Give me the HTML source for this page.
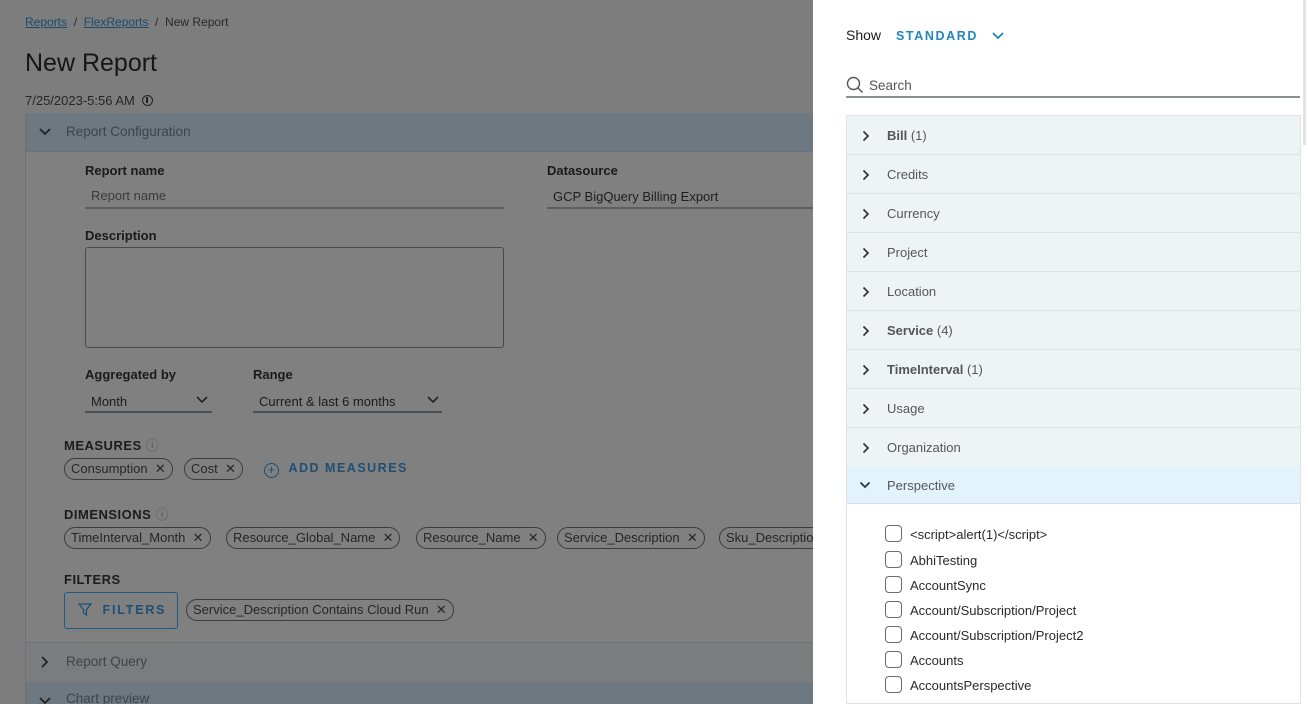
<!DOCTYPE html>
<html style="width:1308px;height:704px;overflow:hidden"><head><meta charset="utf-8"><style>
*{box-sizing:border-box;margin:0;padding:0}
body{width:1308px;height:704px;overflow:hidden;background:#7d7d7d;font-family:"Liberation Sans",sans-serif;position:relative;color:#1b1b1b}
.a{position:absolute}
.lbl{font-size:13px;font-weight:bold;color:#1a1a1a}
.pill{position:absolute;height:22px;border:1.5px solid #3c3c3c;border-radius:11px;font-size:13px;color:#262626;padding:2px 6px;white-space:nowrap}
.cap{font-size:13px;font-weight:bold;letter-spacing:.5px;color:#1c1c1c}
.row{position:absolute;left:847px;width:453px;height:39px;background:#eef3f6;border-bottom:1.5px solid #dce3e7;font-size:13px;color:#565656;padding:12px 0 0 40px}
.row svg{position:absolute;left:15px;top:14px}
.cb{position:absolute;left:885px;width:17px;height:17px;border:1.5px solid #6a6a6a;border-radius:4px}
.ct{position:absolute;left:910px;font-size:13px;color:#2a2a2a}
</style></head><body>
<div class="a" style="left:25px;top:15px;font-size:12px;color:#2a2a2a"><span style="color:#1a4a6e;text-decoration:underline">Reports</span> &nbsp;/&nbsp; <span style="color:#1a4a6e;text-decoration:underline">FlexReports</span> &nbsp;/&nbsp; New Report</div>
<div class="a" style="left:25px;top:49px;font-size:25px;color:#161616">New Report</div>
<div class="a" style="left:25px;top:93px;font-size:13px;color:#262626">7/25/2023-5:56 AM &nbsp;<span style="display:inline-block;width:11px;height:11px;border:1.5px solid #222;border-radius:50%;vertical-align:-1px;position:relative"><span style="position:absolute;left:3px;top:1px;width:1.5px;height:6px;background:#222"></span></span></div>
<div class="a" style="left:25px;top:113px;width:800px;height:600px;background:#808080;border-left:1.5px solid #707070"></div>
<div class="a" style="left:26px;top:113px;width:800px;height:39px;background:#6e7880;border-bottom:1px solid #67727a"></div>
<svg class="a" style="left:38px;top:127px" width="14" height="10"><path d="M2 2l5 5 5-5" fill="none" stroke="#222" stroke-width="1.8"/></svg>
<div class="a" style="left:66px;top:124px;font-size:13.5px;color:#3d4449">Report Configuration</div>
<div class="a lbl" style="left:85px;top:163px">Report name</div>
<div class="a" style="left:91px;top:188px;font-size:13px;color:#3b3b3b">Report name</div>
<div class="a" style="left:85px;top:207px;width:419px;height:2px;background:#5a5f63"></div>
<div class="a lbl" style="left:547px;top:163px">Datasource</div>
<div class="a" style="left:553px;top:189px;font-size:13px;color:#1e1e1e">GCP BigQuery Billing Export</div>
<div class="a" style="left:547px;top:207px;width:270px;height:2px;background:#5a5f63"></div>
<div class="a lbl" style="left:85px;top:228px">Description</div>
<div class="a" style="left:85px;top:247px;width:419px;height:101px;border:1.5px solid #4a4a4a;border-radius:3px"></div>
<div class="a lbl" style="left:85px;top:367px">Aggregated by</div>
<div class="a lbl" style="left:253px;top:367px">Range</div>
<div class="a" style="left:91px;top:394px;font-size:13px">Month</div>
<svg class="a" style="left:195px;top:395px" width="14" height="10"><path d="M2 2l5 5 5-5" fill="none" stroke="#222" stroke-width="1.6"/></svg>
<div class="a" style="left:85px;top:411px;width:127px;height:2px;background:#4a4f53"></div>
<div class="a" style="left:259px;top:394px;font-size:13px">Current &amp; last 6 months</div>
<svg class="a" style="left:426px;top:395px" width="14" height="10"><path d="M2 2l5 5 5-5" fill="none" stroke="#222" stroke-width="1.6"/></svg>
<div class="a" style="left:253px;top:411px;width:189px;height:2px;background:#4a4f53"></div>
<div class="a cap" style="left:64px;top:435px">MEASURES <span style="font-weight:normal;color:#555">ⓘ</span></div>
<div class="pill" style="left:64px;top:458px">Consumption&nbsp; ✕</div>
<div class="pill" style="left:184px;top:458px">Cost&nbsp; ✕</div>
<div class="a" style="left:264px;top:461px;font-size:12.5px;font-weight:bold;letter-spacing:1.5px;color:#1d4f75"><span style="display:inline-block;width:15px;height:15px;border:1.5px solid #1d4f75;border-radius:50%;text-align:center;line-height:12px;font-weight:normal;letter-spacing:0;vertical-align:-2px">+</span>&nbsp; ADD MEASURES</div>
<div class="a cap" style="left:64px;top:504px">DIMENSIONS <span style="font-weight:normal;color:#555">ⓘ</span></div>
<div class="pill" style="left:64px;top:527px">TimeInterval_Month&nbsp; ✕</div>
<div class="pill" style="left:226px;top:527px">Resource_Global_Name&nbsp; ✕</div>
<div class="pill" style="left:416px;top:527px">Resource_Name&nbsp; ✕</div>
<div class="pill" style="left:557px;top:527px">Service_Description&nbsp; ✕</div>
<div class="pill" style="left:719px;top:527px">Sku_Description&nbsp; ✕</div>
<div class="a cap" style="left:64px;top:572px">FILTERS</div>
<div class="a" style="left:64px;top:592px;width:114px;height:37px;border:1.5px solid #1e5a85;border-radius:3px;font-size:12.5px;font-weight:bold;letter-spacing:1.8px;color:#1d4f75;padding:10px 0 0 13px"><svg width="14" height="13" style="vertical-align:-2px"><path d="M1 1h12L8.5 6.5V12L5.5 10V6.5z" fill="none" stroke="#1d4f75" stroke-width="1.3"/></svg>&nbsp; FILTERS</div>
<div class="pill" style="left:186px;top:599px">Service_Description Contains Cloud Run&nbsp; ✕</div>
<div class="a" style="left:26px;top:642px;width:800px;height:40px;background:#7a7c7e;border-top:1px solid #707070"></div>
<svg class="a" style="left:40px;top:655px" width="10" height="14"><path d="M2 2l5 5-5 5" fill="none" stroke="#222" stroke-width="1.8"/></svg>
<div class="a" style="left:66px;top:654px;font-size:13.5px;color:#3d4449">Report Query</div>
<div class="a" style="left:26px;top:682px;width:800px;height:30px;background:#6e7880"></div>
<svg class="a" style="left:38px;top:696px" width="14" height="10"><path d="M2 2l5 5 5-5" fill="none" stroke="#222" stroke-width="1.8"/></svg>
<div class="a" style="left:66px;top:691px;font-size:13.5px;color:#3d4449">Chart preview</div>

<div class="a" style="left:813px;top:0;width:495px;height:704px;background:#fff"></div>
<div class="a" style="left:1303px;top:0;width:3px;height:145px;background:#e4e4e4"></div>
<div class="a" style="left:846px;top:27px;font-size:14px;color:#1b1b1b">Show</div>
<div class="a" style="left:896px;top:29px;font-size:12.5px;font-weight:bold;letter-spacing:1.6px;color:#1f86c0">STANDARD</div>
<svg class="a" style="left:991px;top:31px" width="14" height="10"><path d="M2 2l5 5 5-5" fill="none" stroke="#1f86c0" stroke-width="1.8"/></svg>
<svg class="a" style="left:846px;top:76px" width="18" height="18"><circle cx="7.5" cy="7.5" r="6" fill="none" stroke="#555" stroke-width="1.4"/><path d="M12 12l4.5 4.5" stroke="#555" stroke-width="1.4"/></svg>
<div class="a" style="left:869px;top:78px;font-size:13.5px;color:#555">Search</div>
<div class="a" style="left:846px;top:96px;width:454px;height:1.5px;background:#8a8f93"></div>
<div class="a" style="left:846px;top:115px;width:455px;height:589px;border:1px solid #dde3e7"></div>
<div class="row" style="top:116px"><svg width="8" height="12"><path d="M1.5 1.5l4.5 4.5-4.5 4.5" fill="none" stroke="#333" stroke-width="1.7"/></svg><b style="color:#555">Bill</b> (1)</div>
<div class="row" style="top:155px"><svg width="8" height="12"><path d="M1.5 1.5l4.5 4.5-4.5 4.5" fill="none" stroke="#333" stroke-width="1.7"/></svg>Credits</div>
<div class="row" style="top:194px"><svg width="8" height="12"><path d="M1.5 1.5l4.5 4.5-4.5 4.5" fill="none" stroke="#333" stroke-width="1.7"/></svg>Currency</div>
<div class="row" style="top:233px"><svg width="8" height="12"><path d="M1.5 1.5l4.5 4.5-4.5 4.5" fill="none" stroke="#333" stroke-width="1.7"/></svg>Project</div>
<div class="row" style="top:272px"><svg width="8" height="12"><path d="M1.5 1.5l4.5 4.5-4.5 4.5" fill="none" stroke="#333" stroke-width="1.7"/></svg>Location</div>
<div class="row" style="top:311px"><svg width="8" height="12"><path d="M1.5 1.5l4.5 4.5-4.5 4.5" fill="none" stroke="#333" stroke-width="1.7"/></svg><b style="color:#555">Service</b> (4)</div>
<div class="row" style="top:350px"><svg width="8" height="12"><path d="M1.5 1.5l4.5 4.5-4.5 4.5" fill="none" stroke="#333" stroke-width="1.7"/></svg><b style="color:#555">TimeInterval</b> (1)</div>
<div class="row" style="top:389px"><svg width="8" height="12"><path d="M1.5 1.5l4.5 4.5-4.5 4.5" fill="none" stroke="#333" stroke-width="1.7"/></svg>Usage</div>
<div class="row" style="top:428px"><svg width="8" height="12"><path d="M1.5 1.5l4.5 4.5-4.5 4.5" fill="none" stroke="#333" stroke-width="1.7"/></svg>Organization</div>
<div class="row" style="top:466px;background:#e2f3fb;height:38px;border-bottom:1.5px solid #d3e3ea"><svg width="12" height="8" style="left:12px;top:15px"><path d="M1.5 1.5l4.5 4.5 4.5-4.5" fill="none" stroke="#333" stroke-width="1.7"/></svg>Perspective</div>
<div class="cb" style="top:525px"></div><div class="ct" style="top:527px">&lt;script&gt;alert(1)&lt;/script&gt;</div>
<div class="cb" style="top:551px"></div><div class="ct" style="top:553px">AbhiTesting</div>
<div class="cb" style="top:576px"></div><div class="ct" style="top:578px">AccountSync</div>
<div class="cb" style="top:601px"></div><div class="ct" style="top:603px">Account/Subscription/Project</div>
<div class="cb" style="top:626px"></div><div class="ct" style="top:628px">Account/Subscription/Project2</div>
<div class="cb" style="top:651px"></div><div class="ct" style="top:653px">Accounts</div>
<div class="cb" style="top:676px"></div><div class="ct" style="top:678px">AccountsPerspective</div>
</body></html>
